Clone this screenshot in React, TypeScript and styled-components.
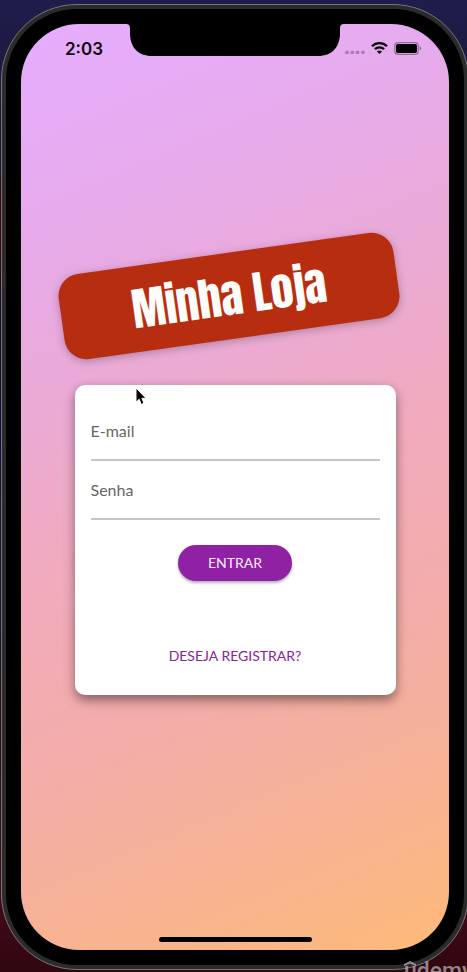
import React from "react";
import styled, { createGlobalStyle } from "styled-components";

const GlobalStyle = createGlobalStyle`
  * { box-sizing: border-box; }
  html, body { margin: 0; }
  body { overflow: hidden; background: #1d1a44; }
`;

const Desktop = styled.div`
  position: relative;
  display: flex;
  min-height: 100vh;
  padding: 4px 0 2px 1px;
  overflow: hidden;
  font-family: Lato, sans-serif;
  background: linear-gradient(
    180deg,
    #1f1d4b 0,
    #1a1838 12%,
    #16142e 18%,
    #3a0507 19%,
    #3a0507 26%,
    #150b33 32%,
    #150b3c 45%,
    #101a3a 55%,
    #2a0a18 75%,
    #430b1a 92%,
    #30060f 100%
  );
`;

const Phone = styled.div`
  display: flex;
  flex: 1;
  margin-right: -2px;
  padding: 4px;
  border: 1px solid #77757a;
  border-radius: 76px;
  background: #2c2b2b;
`;

const Bezel = styled.div`
  display: flex;
  flex: 1;
  padding: 15px;
  border-radius: 71px;
  background: #000;
`;

const Screen = styled.div`
  display: flex;
  flex: 1;
  flex-direction: column;
  border-radius: 58px;
  background: linear-gradient(
    157deg,
    #e5adff 0%,
    #e7aaea 20%,
    #ebaad3 37%,
    #f1abbd 51%,
    #f4ada8 69%,
    #f6b19a 80%,
    #fab684 93%,
    #ffba78 100%
  );
`;

const StatusBar = styled.header`
  display: grid;
  grid-template-columns: 1fr 210px 1fr;
  height: 32px;
`;

const Clock = styled.time`
  padding: 15px 0 0 44px;
  font: 600 17px/20px Inter, sans-serif;
  color: #0b060d;
`;

const Notch = styled.svg`
  display: block;
  margin: -1px -5px 0;
`;

const Indicators = styled.div`
  display: flex;
  align-items: center;
  justify-content: flex-end;
  gap: 6px;
  height: 20px;
  margin-top: 14px;
  padding-right: 27px;
  svg { flex: none; }
`;

const Main = styled.main`
  display: flex;
  flex: 1;
  flex-direction: column;
  align-items: center;
  justify-content: center;
  gap: 46px;
  padding-bottom: 46px;
`;

const Banner = styled.h1`
  display: flex;
  align-items: center;
  justify-content: center;
  width: 79%;
  height: 86px;
  margin: 0 11px 0 0;
  border-radius: 22px;
  background: #b72d10;
  box-shadow: 0 2px 8px rgba(0, 0, 0, 0.26);
  color: #fffdfc;
  font: 400 45px/68px Anton, "Liberation Sans Narrow", Roboto, sans-serif;
  white-space: nowrap;
  transform: rotate(-8deg);
`;

const Card = styled.form`
  display: flex;
  flex-direction: column;
  align-items: center;
  width: 75%;
  padding: 17px 16px 15px;
  border-radius: 10px;
  background: #fff;
  box-shadow: 0 8px 10px -5px rgba(0, 0, 0, 0.2), 0 6px 12px 2px rgba(0, 0, 0, 0.2),
    0 2px 8px rgba(0, 0, 0, 0.14);
`;

const Field = styled.div`
  display: flex;
  flex-direction: column;
  width: 100%;
  height: 59px;
  padding-top: 19px;
`;

const Label = styled.label`
  font-size: 16px;
  line-height: 20px;
  color: #666;
`;

const Input = styled.input`
  flex: 1;
  width: 100%;
  min-height: 0;
  padding: 0;
  border: 0;
  border-bottom: 2px solid #c6c6c6;
  outline: 0;
  background: transparent;
  font: 16px Lato, sans-serif;
`;

const SubmitButton = styled.button`
  height: 36px;
  margin: 25px 0 52px;
  padding: 0 30px;
  border: 0;
  border-radius: 18px;
  background: #9021a5;
  box-shadow: 0 2px 3px rgba(0, 0, 0, 0.3);
  color: #fbeefd;
  font: 14px/20px Lato, sans-serif;
`;

const TextButton = styled.button`
  height: 47px;
  padding: 0 8px;
  border: 0;
  background: transparent;
  color: #86249a;
  font: 14px/20px Lato, sans-serif;
`;

const HomeIndicator = styled.div`
  width: 153px;
  height: 5px;
  margin: 0 auto 8px;
  border-radius: 3px;
  background: #000;
`;

const Pointer = styled.svg`
  position: absolute;
  top: 387px;
  left: 133px;
`;

const Watermark = styled.div`
  position: absolute;
  top: 961px;
  left: 404px;
  height: 11px;
  overflow: hidden;
  color: rgba(190, 180, 186, 0.72);
  font: 500 23px/22px Roboto, sans-serif;
  svg { display: block; }
  span { display: block; margin-top: -5px; }
`;

const fields = [
  { id: "email", label: "E-mail", type: "email" },
  { id: "senha", label: "Senha", type: "password" },
];

export default function App() {
  return (
    <Desktop>
      <GlobalStyle />
      <Phone>
        <Bezel>
          <Screen>
            <StatusBar>
              <Clock>2:03</Clock>
              <Notch width="220" height="33" viewBox="0 0 220 33" aria-hidden="true">
                <path d="M0 0H220V1C216 1 215 2 215 6V10C215 24 207 33 193 33H27C13 33 5 24 5 10V6C5 2 4 1 0 1Z" />
              </Notch>
              <Indicators>
                <svg width="20" height="12" viewBox="0 0 20 12" fill="#5b3568" opacity=".4" aria-hidden="true">
                  <circle cx="2" cy="10.5" r="1.9" />
                  <circle cx="7.3" cy="10.5" r="1.9" />
                  <circle cx="12.6" cy="10.5" r="1.9" />
                  <circle cx="17.9" cy="10.5" r="1.9" />
                </svg>
                <svg width="17" height="12" viewBox="0 0 17 12" fill="none" stroke="#0b060d" strokeWidth="2.3" aria-hidden="true">
                  <path d="M1 4.3C5.2.1 11.8.1 16 4.3" />
                  <path d="M3.9 7.2C6.5 4.7 10.5 4.7 13.1 7.2" />
                  <path d="M8.5 12L5.9 9.4C7.4 8.2 9.6 8.2 11.1 9.4Z" fill="#0b060d" stroke="none" />
                </svg>
                <svg width="28" height="13" viewBox="0 0 28 13" aria-hidden="true">
                  <rect x=".7" y=".7" width="23.6" height="11.6" rx="3.4" fill="none" stroke="#94699f" strokeWidth="1.2" />
                  <rect x="2" y="2" width="21" height="9" rx="1.8" fill="#000" />
                  <path d="M25.6 4.3C27.8 5 27.8 8 25.6 8.7Z" fill="#94699f" />
                </svg>
              </Indicators>
            </StatusBar>
            <Main>
              <Banner>Minha Loja</Banner>
              <Card onSubmit={(event) => event.preventDefault()}>
                {fields.map((field) => (
                  <Field key={field.id}>
                    <Label htmlFor={field.id}>{field.label}</Label>
                    <Input id={field.id} type={field.type} />
                  </Field>
                ))}
                <SubmitButton type="submit">ENTRAR</SubmitButton>
                <TextButton type="button">DESEJA REGISTRAR?</TextButton>
              </Card>
            </Main>
            <HomeIndicator />
          </Screen>
        </Bezel>
      </Phone>
      <Pointer width="16" height="20" viewBox="0 0 16 20" aria-hidden="true">
        <path d="M3 1V15.2L6.2 12.3L8.3 17.4L11 16.3L8.9 11.3H13Z" stroke="#fff" strokeWidth="1" />
      </Pointer>
      <Watermark>
        <svg width="12" height="5" viewBox="0 0 12 5" aria-hidden="true">
          <path d="M6 0L12 3V5L6 2.4L0 5V3Z" fill="currentColor" />
        </svg>
        <span>udemy</span>
      </Watermark>
    </Desktop>
  );
}
